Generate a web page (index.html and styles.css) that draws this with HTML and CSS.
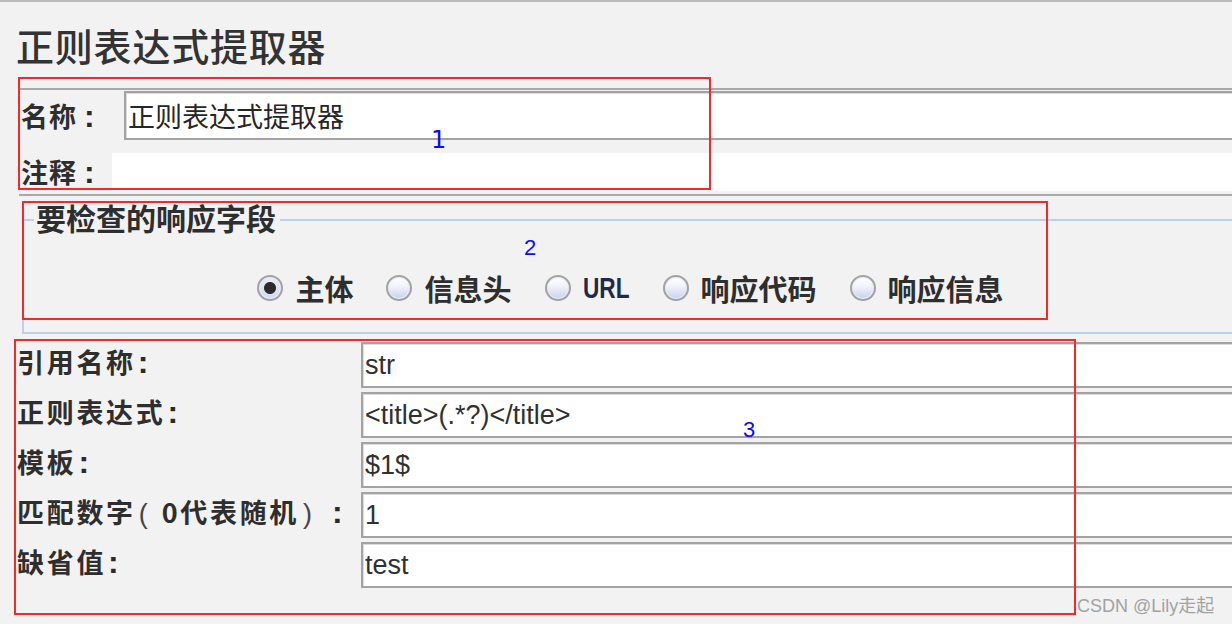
FILE: index.html
```html
<!DOCTYPE html>
<html lang="zh-CN">
<head>
<meta charset="utf-8">
<title>正则表达式提取器</title>
<link rel="stylesheet" href="styles.css">
</head>
<body>
<div class="page">
  <h1 class="title">正则表达式提取器</h1>

  <div class="panel-name">
    <div class="row row-name">
      <label class="lbl lbl-name">名称<span class="colon colon-s1">:</span></label>
      <div class="field field-name">正则表达式提取器</div>
    </div>
    <div class="row row-comment">
      <label class="lbl lbl-comment">注释<span class="colon colon-s1">:</span></label>
      <div class="comment"></div>
    </div>
  </div>

  <fieldset class="group">
    <legend class="legend">要检查的响应字段</legend>
    <div class="radios">
      <span class="opt"><span class="radio checked"></span><span class="opt-text">主体</span></span>
      <span class="opt"><span class="radio"></span><span class="opt-text">信息头</span></span>
      <span class="opt"><span class="radio"></span><span class="opt-latin"><span class="opt-latin-inner">URL</span></span></span>
      <span class="opt"><span class="radio"></span><span class="opt-text">响应代码</span></span>
      <span class="opt"><span class="radio"></span><span class="opt-text">响应信息</span></span>
    </div>
  </fieldset>

  <div class="form">
    <span class="flbl">引用名称<span class="colon">:</span></span><div class="fld">str</div>
    <span class="flbl">正则表达式<span class="colon">:</span></span><div class="fld">&lt;title&gt;(.*?)&lt;/title&gt;</div>
    <span class="flbl">模板<span class="colon">:</span></span><div class="fld">$1$</div>
    <span class="flbl">匹配数字<span class="paren paren-open">(</span><span class="digit">0</span>代表随机<span class="paren paren-close">)</span><span class="colon colon-long">:</span></span><div class="fld">1</div>
    <span class="flbl">缺省值<span class="colon">:</span></span><div class="fld">test</div>
  </div>

  <div class="mark mark-1"></div>
  <div class="mark mark-2"></div>
  <div class="mark mark-3"></div>
  <span class="num num-1">1</span>
  <span class="num num-2">2</span>
  <span class="num num-3">3</span>
  <span class="watermark">CSDN @Lily走起</span>
</div>
</body>
</html>
```

FILE: styles.css
```css
html, body {
  margin: 0;
  padding: 0;
  overflow: hidden;
  background: #f2f2f2;
}

body {
  font-family: "Noto Sans CJK SC", "Noto Sans", sans-serif;
  color: #333;
}

.page {
  position: relative;
  width: 1240px;
  height: 622px;
  border-top: 2px solid #bcbcbc;
  overflow: hidden;
}

.title {
  margin: 23px 0 23px 16px;
  font-size: 38px;
  line-height: 40px;
  font-weight: 500;
  color: #333;
  letter-spacing: 0.8px;
}

.colon {
  font-family: "Liberation Sans", Arial, sans-serif;
  font-size: 32px;
  line-height: 0;
  font-weight: 700;
  letter-spacing: 0;
  margin-left: 2px;
  color: #2a2a2a;
}

.colon-s1 {
  margin-left: 7px;
}

.colon-long {
  margin-left: 20px;
}

.paren {
  font-family: "Liberation Sans", Arial, sans-serif;
  font-size: 27px;
  line-height: 0;
  font-weight: 400;
  letter-spacing: 0;
  color: #444;
}

.paren-open {
  margin-left: 3px;
  margin-right: 14px;
}

.paren-close {
  margin-left: 4px;
}

.digit {
  letter-spacing: 2.5px;
}

/* ---------- section 1 ---------- */
.panel-name {
  margin-left: 19px;
  border-top: 2px solid #a9a9a9;
  border-bottom: 2px solid #a9a9a9;
  padding-top: 1px;
  padding-bottom: 3px;
}

.row {
  display: flex;
  align-items: center;
}

.lbl {
  font-size: 27px;
  font-weight: 700;
  color: #2e2e2e;
  padding-left: 2px;
  box-sizing: border-box;
  flex: none;
  white-space: nowrap;
  letter-spacing: 1px;
}

.lbl-name {
  width: 105px;
  height: 49px;
  line-height: 49px;
}

.lbl-comment {
  width: 93px;
  height: 38px;
  line-height: 38px;
}

.row-comment {
  margin-top: 13px;
}

.field {
  flex: 1;
  background: #fff;
  border: 2px solid #a3a3a3;
  border-right: none;
  box-shadow: inset 1px 1px 0 #dcdcdc;
  box-sizing: border-box;
}

.field-name {
  height: 49px;
  line-height: 45px;
  font-size: 27px;
  padding-left: 2px;
  color: #262626;
}

.comment {
  flex: 1;
  height: 38px;
  background: #fff;
}

/* ---------- section 2 ---------- */
.group {
  margin: 6px 1px 0 22px;
  padding: 0;
  border: 2px solid #b9d1ea;
  min-width: 0;
}

.legend {
  margin-left: 10px;
  padding: 0 4px 6px 2px;
  font-size: 30px;
  line-height: 30px;
  font-weight: 700;
  color: #2e2e2e;
}

.radios {
  display: flex;
  justify-content: center;
  align-items: center;
  gap: 33px;
  height: 34px;
  margin: 33px 0 27px;
}

.opt {
  display: flex;
  align-items: center;
  gap: 12px;
}

.radio {
  width: 26px;
  height: 26px;
  border-radius: 50%;
  border: 2px solid #a2a2a2;
  box-sizing: border-box;
  background: linear-gradient(#ffffff 0%, #f2f4fb 40%, #c7d0ee 100%);
  box-shadow: inset 0 0 0 1px #e8ecf6;
}

.radio.checked {
  background:
    radial-gradient(circle at 50% 50%, #2b2b2b 0 5.5px, rgba(43,43,43,0) 6.5px),
    linear-gradient(#e9edf8 0%, #d3dbf2 100%);
}

.opt-text {
  font-size: 29px;
  line-height: 34px;
  font-weight: 700;
  color: #2e2e2e;
}

.opt-latin {
  display: block;
  width: 47px;
  height: 34px;
}

.opt-latin-inner {
  display: inline-block;
  font-family: "Liberation Sans", Arial, sans-serif;
  font-size: 29px;
  line-height: 34px;
  font-weight: 700;
  color: #1f2a4a;
  white-space: nowrap;
  transform: scaleX(0.78);
  transform-origin: 0 50%;
}

/* ---------- section 3 ---------- */
.form {
  display: grid;
  grid-template-columns: 344px 1fr;
  grid-auto-rows: 46px;
  row-gap: 4px;
  margin-top: 8px;
  padding-left: 17px;
}

.flbl {
  font-size: 27px;
  line-height: 40px;
  height: 40px;
  font-weight: 700;
  color: #2e2e2e;
  white-space: nowrap;
  letter-spacing: 2.7px;
}

.fld {
  background: #fff;
  border: 2px solid #a3a3a3;
  border-right: none;
  box-shadow: inset 1px 1px 0 #dcdcdc;
  box-sizing: border-box;
  font-family: "Liberation Sans", Arial, sans-serif;
  font-size: 27px;
  line-height: 42px;
  padding-left: 2px;
  color: #303030;
}

/* ---------- annotations ---------- */
.mark {
  position: absolute;
  border: 2px solid #f42a2a;
  box-sizing: border-box;
}

.mark-1 { left: 18px; top: 75px; width: 693px; height: 113px; }
.mark-2 { left: 22px; top: 199px; width: 1026px; height: 119px; }
.mark-3 { left: 14px; top: 337px; width: 1062px; height: 276px; }

.num {
  position: absolute;
  color: #0a0aff;
  line-height: 1;
}

.num-1 { left: 431px; top: 126px; font-family: "DejaVu Sans", sans-serif; font-size: 24px; }
.num-2 { left: 524px; top: 235px; font-family: "Liberation Sans", sans-serif; font-size: 22px; }
.num-3 { left: 743px; top: 417px; font-family: "Liberation Sans", sans-serif; font-size: 22px; }

.watermark {
  position: absolute;
  left: 1077px;
  top: 594px;
  font-family: "Liberation Sans", "Noto Sans CJK SC", sans-serif;
  font-size: 18px;
  line-height: 20px;
  color: #a2a2a2;
  white-space: nowrap;
}
```
